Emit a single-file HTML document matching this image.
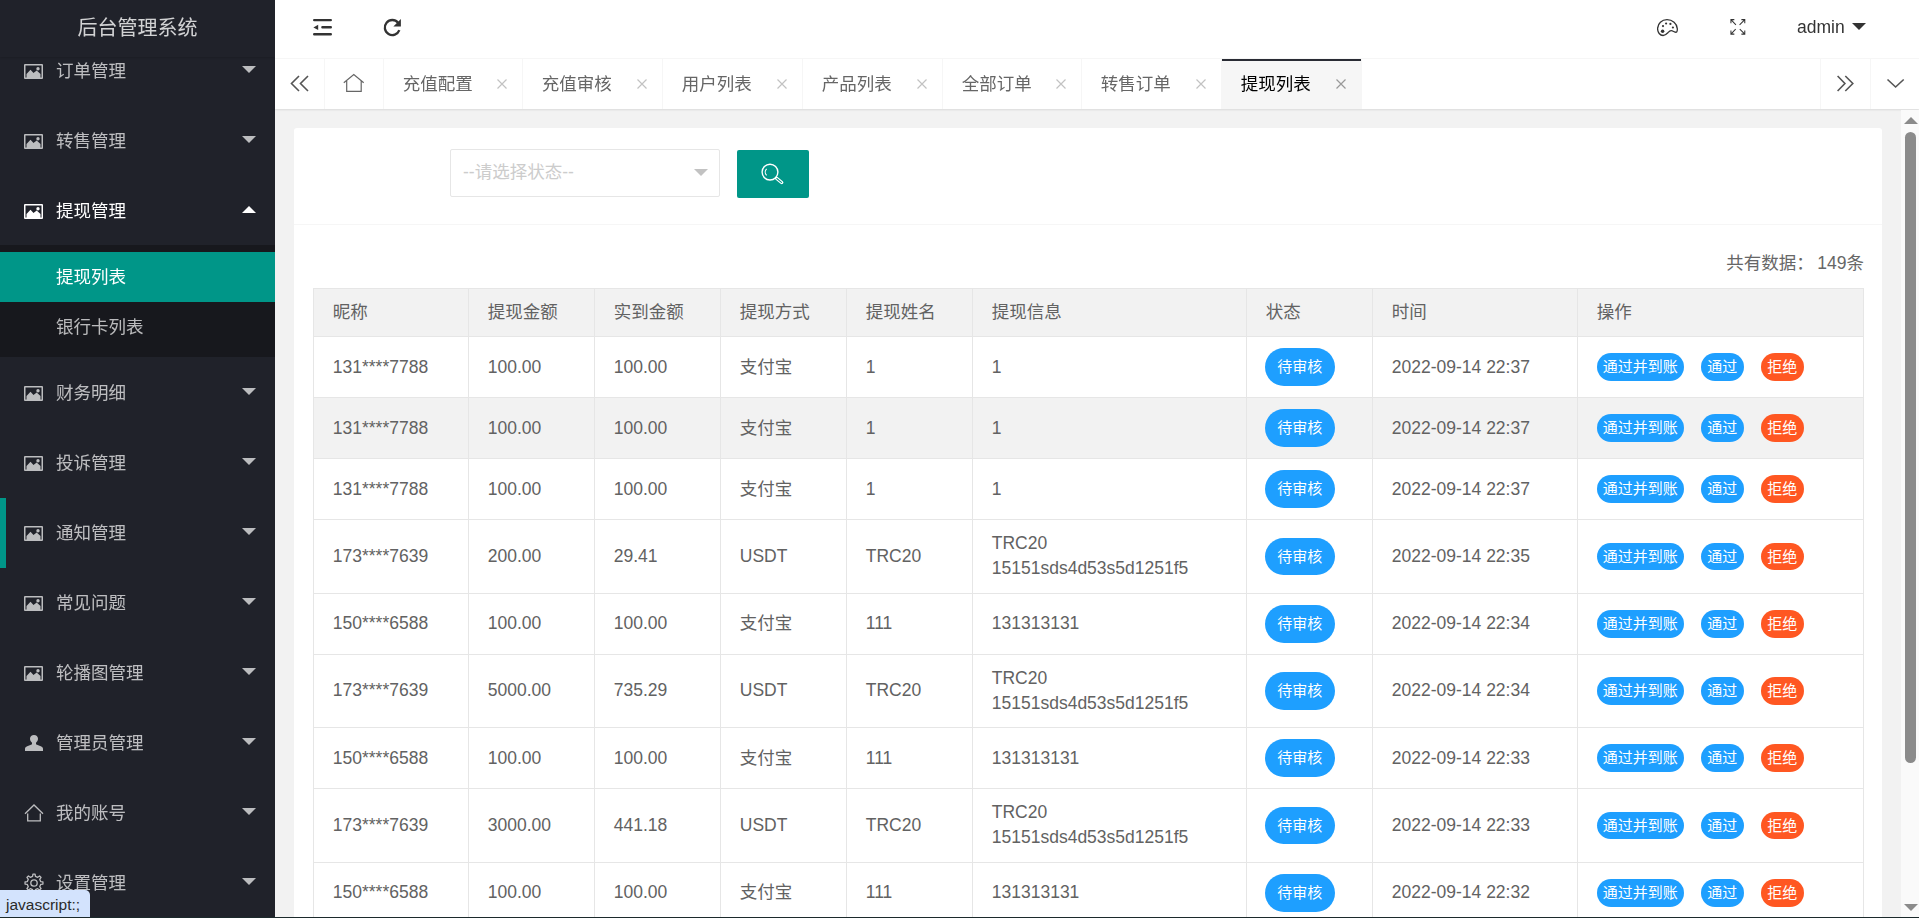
<!DOCTYPE html><html lang="zh-CN"><head><meta charset="utf-8"><title>后台管理系统</title><style>
*{margin:0;padding:0;box-sizing:border-box}
html,body{width:1919px;height:918px;overflow:hidden;background:#f2f2f2}
body{font-family:"Liberation Sans","Noto Sans CJK SC",sans-serif;font-size:17.5px;color:#333;position:relative}
.abs{position:absolute}
#side{position:absolute;left:0;top:0;width:275px;height:918px;background:#20222a;overflow:hidden}
#logo{position:absolute;left:0;top:0;width:275px;height:57px;background:#20222a;color:rgba(255,255,255,.8);font-size:20px;line-height:56px;text-align:center;z-index:5;box-shadow:0 1px 2px 0 rgba(0,0,0,.15)}
.mi{position:absolute;left:0;width:275px;height:70px;color:rgba(255,255,255,.7);line-height:70px}
.mi .ic{position:absolute;left:24px;top:27px;width:20px;height:16px}
.mi .tx{position:absolute;left:56px;top:1px;font-size:17.5px;white-space:nowrap}
.mi .ar{position:absolute;left:242px;top:31px;width:0;height:0;border:7px solid transparent;border-top:7px solid rgba(255,255,255,.7);border-bottom-width:0}
.mi.open{color:#fff}
.mi.open .ar{border:7px solid transparent;border-bottom:7px solid #fff;border-top-width:0;top:31px}
#sub{position:absolute;left:0;top:245px;width:275px;height:112px;background:#17181d}
#sub .s{position:absolute;left:0;width:275px;height:50px;line-height:50px;padding-left:56px;color:rgba(255,255,255,.7);font-size:17.5px}
#sub .s.on{background:#009688;color:#fff}
#side .tx,.g{filter:grayscale(1)}
.g{display:inline-block}
#bar{position:absolute;left:0;top:498px;width:6px;height:70px;background:#009688}
#hdr{position:absolute;left:275px;top:0;width:1644px;height:59px;background:#fff;border-bottom:1px solid #f7f7f7}
#tabs{position:absolute;left:275px;top:59px;width:1644px;height:50px;background:#fff;box-shadow:0 1px 2px 0 rgba(0,0,0,.1)}
.tb{position:absolute;top:0;height:50px;border-right:1px solid #f6f6f6;color:#666;font-size:17.5px;line-height:50px;white-space:nowrap}
.tb .x{position:absolute;right:14.500px;top:19px;width:12px;height:12px}
.tb.on{background:#f6f6f6;color:#000}
.tb.on:before{content:"";position:absolute;left:0;top:0;width:100%;height:2px;background:#292b34}
#card{position:absolute;left:294px;top:128px;width:1588px;height:800px;background:#fff;border-radius:3px}
#sel{position:absolute;left:450px;top:149px;width:270px;height:48px;border:1px solid #e6e6e6;border-radius:2px;background:#fff;color:#ccc;font-size:17.5px;line-height:44px;padding-left:12px}
#sel:after{content:"";position:absolute;left:243px;top:19px;border:7px solid transparent;border-top:7px solid #c2c2c2;border-bottom-width:0}
#btn{position:absolute;left:737px;top:150px;width:72px;height:48px;background:#009688;border-radius:2px}
#sep{position:absolute;left:294px;top:224px;width:1588px;height:1px;background:#f6f6f6}
#cnt{position:absolute;right:55px;top:250px;font-size:17.5px;color:#666;line-height:26px;white-space:pre}
table{position:absolute;left:313px;top:288px;width:1550px;border-collapse:collapse;table-layout:fixed;color:#626262;font-size:17.5px}
th,td{border:1px solid #e6e6e6;padding:0 0 0 18.750px;text-align:left;font-weight:400;line-height:25px;white-space:nowrap}
th{height:48px;background:#f2f2f2}
td.u{padding-bottom:2px}

tr.hv td{background:#f2f2f2}
.bd{display:inline-block;height:37.500px;line-height:37.500px;padding:0 12.500px;border-radius:19px;background:#1e9fff;color:#fff;font-size:15px;vertical-align:middle}
.b{display:inline-block;height:27.500px;line-height:27.500px;padding:0 6.250px;border-radius:14px;background:#1e9fff;color:#fff;font-size:15px;vertical-align:middle;margin-right:17.500px}
.b.r{background:#ff5722;margin-right:0}
#sb{position:absolute;left:1901px;top:110px;width:18px;height:808px;background:#fafafa}
#sb .th{position:absolute;left:4px;top:22px;width:11px;height:631px;border-radius:6px;background:#8b8b8b}
#sb .up{position:absolute;left:3px;top:7px;border:7px solid transparent;border-bottom:7px solid #8b8b8b;border-top-width:0}
#sb .dn{position:absolute;left:3px;top:794px;border:7px solid transparent;border-top:7px solid #8b8b8b;border-bottom-width:0}
#st{position:absolute;left:0;top:890px;width:90px;height:28px;background:#d3e3fd;border-top-right-radius:5px;color:#2a2a2a;font-size:15.500px;line-height:29px;padding-left:6px;z-index:9}
#bl{position:absolute;left:0;top:917px;width:1919px;height:1px;background:#1c2a2c;z-index:10}
</style></head><body>
<div id="side">
<div class="mi" style="top:35px"><svg class="ic" style="width:19px;height:15px;top:29px" viewBox="0 0 19 15"><path fill="currentColor" fill-rule="evenodd" d="M1 0h17a1 1 0 0 1 1 1v13a1 1 0 0 1-1 1H1a1 1 0 0 1-1-1V1a1 1 0 0 1 1-1zM1.500 1.500v12h16v-12zM2.500 13.500V10l4-4.300 3 3.200L12.700 6.500 16.500 10v3.500zM14 3a1.700 1.700 0 1 1 0 3.400A1.700 1.700 0 0 1 14 3z"/></svg><span class="tx">订单管理</span><i class="ar"></i></div>
<div class="mi" style="top:105px"><svg class="ic" style="width:19px;height:15px;top:29px" viewBox="0 0 19 15"><path fill="currentColor" fill-rule="evenodd" d="M1 0h17a1 1 0 0 1 1 1v13a1 1 0 0 1-1 1H1a1 1 0 0 1-1-1V1a1 1 0 0 1 1-1zM1.500 1.500v12h16v-12zM2.500 13.500V10l4-4.300 3 3.200L12.700 6.500 16.500 10v3.500zM14 3a1.700 1.700 0 1 1 0 3.400A1.700 1.700 0 0 1 14 3z"/></svg><span class="tx">转售管理</span><i class="ar"></i></div>
<div class="mi open" style="top:175px"><svg class="ic" style="width:19px;height:15px;top:29px" viewBox="0 0 19 15"><path fill="currentColor" fill-rule="evenodd" d="M1 0h17a1 1 0 0 1 1 1v13a1 1 0 0 1-1 1H1a1 1 0 0 1-1-1V1a1 1 0 0 1 1-1zM1.500 1.500v12h16v-12zM2.500 13.500V10l4-4.300 3 3.200L12.700 6.500 16.500 10v3.500zM14 3a1.700 1.700 0 1 1 0 3.400A1.700 1.700 0 0 1 14 3z"/></svg><span class="tx">提现管理</span><i class="ar"></i></div>
<div class="mi" style="top:357px"><svg class="ic" style="width:19px;height:15px;top:29px" viewBox="0 0 19 15"><path fill="currentColor" fill-rule="evenodd" d="M1 0h17a1 1 0 0 1 1 1v13a1 1 0 0 1-1 1H1a1 1 0 0 1-1-1V1a1 1 0 0 1 1-1zM1.500 1.500v12h16v-12zM2.500 13.500V10l4-4.300 3 3.200L12.700 6.500 16.500 10v3.500zM14 3a1.700 1.700 0 1 1 0 3.400A1.700 1.700 0 0 1 14 3z"/></svg><span class="tx">财务明细</span><i class="ar"></i></div>
<div class="mi" style="top:427px"><svg class="ic" style="width:19px;height:15px;top:29px" viewBox="0 0 19 15"><path fill="currentColor" fill-rule="evenodd" d="M1 0h17a1 1 0 0 1 1 1v13a1 1 0 0 1-1 1H1a1 1 0 0 1-1-1V1a1 1 0 0 1 1-1zM1.500 1.500v12h16v-12zM2.500 13.500V10l4-4.300 3 3.200L12.700 6.500 16.500 10v3.500zM14 3a1.700 1.700 0 1 1 0 3.400A1.700 1.700 0 0 1 14 3z"/></svg><span class="tx">投诉管理</span><i class="ar"></i></div>
<div class="mi" style="top:497px"><svg class="ic" style="width:19px;height:15px;top:29px" viewBox="0 0 19 15"><path fill="currentColor" fill-rule="evenodd" d="M1 0h17a1 1 0 0 1 1 1v13a1 1 0 0 1-1 1H1a1 1 0 0 1-1-1V1a1 1 0 0 1 1-1zM1.500 1.500v12h16v-12zM2.500 13.500V10l4-4.300 3 3.200L12.700 6.500 16.500 10v3.500zM14 3a1.700 1.700 0 1 1 0 3.400A1.700 1.700 0 0 1 14 3z"/></svg><span class="tx">通知管理</span><i class="ar"></i></div>
<div class="mi" style="top:567px"><svg class="ic" style="width:19px;height:15px;top:29px" viewBox="0 0 19 15"><path fill="currentColor" fill-rule="evenodd" d="M1 0h17a1 1 0 0 1 1 1v13a1 1 0 0 1-1 1H1a1 1 0 0 1-1-1V1a1 1 0 0 1 1-1zM1.500 1.500v12h16v-12zM2.500 13.500V10l4-4.300 3 3.200L12.700 6.500 16.500 10v3.500zM14 3a1.700 1.700 0 1 1 0 3.400A1.700 1.700 0 0 1 14 3z"/></svg><span class="tx">常见问题</span><i class="ar"></i></div>
<div class="mi" style="top:637px"><svg class="ic" style="width:19px;height:15px;top:29px" viewBox="0 0 19 15"><path fill="currentColor" fill-rule="evenodd" d="M1 0h17a1 1 0 0 1 1 1v13a1 1 0 0 1-1 1H1a1 1 0 0 1-1-1V1a1 1 0 0 1 1-1zM1.500 1.500v12h16v-12zM2.500 13.500V10l4-4.300 3 3.200L12.700 6.500 16.500 10v3.500zM14 3a1.700 1.700 0 1 1 0 3.400A1.700 1.700 0 0 1 14 3z"/></svg><span class="tx">轮播图管理</span><i class="ar"></i></div>
<div class="mi" style="top:707px"><svg class="ic" style="left:25px;top:28px;width:18px;height:16px" viewBox="1 0 18 18" preserveAspectRatio="none"><path fill="currentColor" d="M10 0c2.300 0 4 1.900 4 4.300 0 1.700-.8 3.400-2 4.300v1.300c0 .6.400 1 1 1.200l3.800 1.500c1.300.5 2.200 1.600 2.200 3V18H1v-2.400c0-1.400.9-2.500 2.200-3L7 11.100c.6-.2 1-.6 1-1.200V8.600C6.800 7.700 6 6 6 4.300 6 1.900 7.700 0 10 0z"/></svg><span class="tx">管理员管理</span><i class="ar"></i></div>
<div class="mi" style="top:777px"><svg class="ic" style="left:24px;top:27px;width:20px;height:18px" viewBox="0 0 20 18"><path fill="none" stroke="currentColor" stroke-width="1.300" stroke-linejoin="miter" d="M1 9.700L10 1l9 8.700M3.700 9.500v7.300h12.600V9.500"/></svg><span class="tx">我的账号</span><i class="ar"></i></div>
<div class="mi" style="top:847px"><svg class="ic" style="left:24px;top:26px;width:20px;height:20px" viewBox="0 0 20 20"><g fill="none" stroke="currentColor" stroke-width="1.300" stroke-linejoin="round"><circle cx="10" cy="10" r="3.200"/><path d="M8.57 3.35 L8.94 1.06 L11.06 1.06 L11.43 3.35 L13.69 4.29 L15.57 2.93 L17.07 4.43 L15.71 6.31 L16.65 8.57 L18.94 8.94 L18.94 11.06 L16.65 11.43 L15.71 13.69 L17.07 15.57 L15.57 17.07 L13.69 15.71 L11.43 16.65 L11.06 18.94 L8.94 18.94 L8.57 16.65 L6.31 15.71 L4.43 17.07 L2.93 15.57 L4.29 13.69 L3.35 11.43 L1.06 11.06 L1.06 8.94 L3.35 8.57 L4.29 6.31 L2.93 4.43 L4.43 2.93 L6.31 4.29Z"/></g></svg><span class="tx">设置管理</span><i class="ar"></i></div>
<div id="sub"><div class="s on" style="top:7px"><span class="g">提现列表</span></div><div class="s" style="top:57px"><span class="g">银行卡列表</span></div></div>
<div id="bar"></div>
<div id="logo"><span class="g">后台管理系统</span></div>
</div>
<div id="hdr">
<svg class="abs" style="left:38px;top:18px;width:20px;height:19px" viewBox="0 0 20 19"><g stroke="#333" stroke-width="2.400" stroke-linecap="round"><path d="M1.200 2.100h16.600M9.400 9.300h8.400M1.200 16.300h16.600"/></g><path fill="#333" d="M0.400 9.400l4.800-2.600v5.200z"/></svg>
<svg class="abs" style="left:108px;top:18px;width:20px;height:20px" viewBox="0 0 20 20"><path fill="none" stroke="#333" stroke-width="2.300" d="M16.350 12.070A7.500 7.500 0 1 1 15.050 4.680"/><path fill="#333" d="M17.900 0.900v7.500h-7.500z"/></svg>
<svg class="abs" style="left:1382px;top:19px;width:21px;height:18px" viewBox="0 0 21 18"><path fill="none" stroke="#333" stroke-width="1.300" d="M0.600 9.600C0.700 4.500 4.800 0.700 10 0.700c5.400 0 10 4 10.300 8.900 0.100 1.500-0.100 2.600-0.500 3.200-0.500 0.600-1.400 0.500-2.300 0.100-1.300-0.600-2.300-1.300-3.400-1.200-1.200 0.100-2 0.800-2.900 1.700-1.400 1.400-2.900 3.100-5.100 3.100C3 16.500 0.500 13.400 0.600 9.600z"/><circle cx="6" cy="7.100" r="1.100" fill="#333"/><circle cx="9.100" cy="4.500" r="1.100" fill="#333"/><circle cx="13.400" cy="4.900" r="1.100" fill="#333"/><circle cx="15.900" cy="8.500" r="1.100" fill="#333"/><circle cx="5.600" cy="12.300" r="1.750" fill="#333"/></svg>
<svg class="abs" style="left:1454.500px;top:19px;width:16px;height:16px" viewBox="0 0 17 16" preserveAspectRatio="none"><g fill="none" stroke="#333" stroke-width="1.100"><path d="M1 4.200V0.600h3.600M1 0.600l5.300 5.200M12.100 0.600h3.600v3.600M15.700 0.600l-5.500 5.200M1 11.500v3.600h3.600M1 15.100l5-4.900M15.700 11.500v3.600h-3.600M15.700 15.100l-5.300-4.900"/></g></svg>
<span class="abs" style="left:1522px;top:14px;font-size:17.5px;line-height:26px;color:#333;filter:grayscale(1)">admin</span>
<i class="abs" style="left:1577px;top:23px;border:7px solid transparent;border-top:7px solid #333;border-bottom-width:0"></i>
</div>
<div id="tabs">
<div class="tb" style="left:0;width:50px"></div>
<div class="tb" style="left:50px;width:59px"></div>
<div class="tb" style="left:109px;width:139px;padding-left:18.750px"><span class="g">充值配置</span><svg class="x" viewBox="0 0 12 12"><path stroke="#c2c2c2" stroke-width="1.200" d="M1.500 1.500l9 9M10.500 1.500l-9 9"/></svg></div>
<div class="tb" style="left:248px;width:140px;padding-left:18.750px"><span class="g">充值审核</span><svg class="x" viewBox="0 0 12 12"><path stroke="#c2c2c2" stroke-width="1.200" d="M1.500 1.500l9 9M10.500 1.500l-9 9"/></svg></div>
<div class="tb" style="left:388px;width:140px;padding-left:18.750px"><span class="g">用户列表</span><svg class="x" viewBox="0 0 12 12"><path stroke="#c2c2c2" stroke-width="1.200" d="M1.500 1.500l9 9M10.500 1.500l-9 9"/></svg></div>
<div class="tb" style="left:528px;width:140px;padding-left:18.750px"><span class="g">产品列表</span><svg class="x" viewBox="0 0 12 12"><path stroke="#c2c2c2" stroke-width="1.200" d="M1.500 1.500l9 9M10.500 1.500l-9 9"/></svg></div>
<div class="tb" style="left:668px;width:139px;padding-left:18.750px"><span class="g">全部订单</span><svg class="x" viewBox="0 0 12 12"><path stroke="#c2c2c2" stroke-width="1.200" d="M1.500 1.500l9 9M10.500 1.500l-9 9"/></svg></div>
<div class="tb" style="left:807px;width:140px;padding-left:18.750px"><span class="g">转售订单</span><svg class="x" viewBox="0 0 12 12"><path stroke="#c2c2c2" stroke-width="1.200" d="M1.500 1.500l9 9M10.500 1.500l-9 9"/></svg></div>
<div class="tb on" style="left:947px;width:140px;padding-left:18.750px"><span class="g">提现列表</span><svg class="x" viewBox="0 0 12 12"><path stroke="#999" stroke-width="1.200" d="M1.500 1.500l9 9M10.500 1.500l-9 9"/></svg></div>
<div class="tb" style="left:1545px;width:51px;border-left:1px solid #f6f6f6"></div>
<svg class="abs" style="left:0;top:0;width:1644px;height:50px" viewBox="0 0 1644 50"><g fill="none" stroke="#555" stroke-width="1.600"><path d="M24 17L16.500 24.500 24 32M33 17l-7.500 7.500L33 32"/><path d="M1562.600 17l7.300 7.500-7.300 7.500M1570.300 17l7.500 7.500-7.500 7.500"/><path d="M1612.500 20.500l8.100 7.500 8.100-7.500"/><path stroke="#666" stroke-width="1.200" d="M68.800 23.800L78.800 15.500l9.900 8.300M71.700 22v10.300h14.500V22"/></g></svg>
</div>
<div id="card"></div><div id="sep"></div>
<div id="sel">--请选择状态--</div>
<div id="btn"><svg class="abs" style="left:22px;top:12px;width:26px;height:24px" viewBox="0 0 26 24"><g fill="none" stroke="#fff"><circle cx="11" cy="10.100" r="7.900" stroke-width="1.400"/><path stroke-width="3.400" stroke-linecap="round" d="M17.500 16.200l5.200 4.300"/><path stroke="#009688" stroke-width="1.100" stroke-linecap="round" d="M17.800 16.500l4.700 3.900"/><path stroke-width="1.200" d="M7.600 13.400a4.700 4.700 0 0 1 0-6.600"/></g></svg></div>
<div id="cnt">共有数据：<span style="margin-left:3.500px">149条</span></div>
<table><colgroup><col style="width:155px"><col style="width:126px"><col style="width:126px"><col style="width:126px"><col style="width:126px"><col style="width:274px"><col style="width:126px"><col style="width:205px"><col style="width:286px"></colgroup>
<tr><th>昵称</th><th>提现金额</th><th>实到金额</th><th>提现方式</th><th>提现姓名</th><th>提现信息</th><th>状态</th><th>时间</th><th>操作</th></tr>
<tr class="" style="height:61px"><td>131****7788</td><td>100.00</td><td>100.00</td><td>支付宝</td><td>1</td><td>1</td><td><span class="bd" style="margin-left:-1px">待审核</span></td><td>2022-09-14 22:37</td><td><span class="b" style="padding:0 5.900px">通过并到账</span><span class="b">通过</span><span class="b r">拒绝</span></td></tr>
<tr class="hv" style="height:61px"><td>131****7788</td><td>100.00</td><td>100.00</td><td>支付宝</td><td>1</td><td>1</td><td><span class="bd" style="margin-left:-1px">待审核</span></td><td>2022-09-14 22:37</td><td><span class="b" style="padding:0 5.900px">通过并到账</span><span class="b">通过</span><span class="b r">拒绝</span></td></tr>
<tr class="" style="height:61px"><td>131****7788</td><td>100.00</td><td>100.00</td><td>支付宝</td><td>1</td><td>1</td><td><span class="bd" style="margin-left:-1px">待审核</span></td><td>2022-09-14 22:37</td><td><span class="b" style="padding:0 5.900px">通过并到账</span><span class="b">通过</span><span class="b r">拒绝</span></td></tr>
<tr class="d" style="height:74px"><td>173****7639</td><td>200.00</td><td>29.41</td><td>USDT</td><td>TRC20</td><td class="u">TRC20<br>15151sds4d53s5d1251f5</td><td><span class="bd" style="margin-left:-1px">待审核</span></td><td>2022-09-14 22:35</td><td><span class="b" style="padding:0 5.900px">通过并到账</span><span class="b">通过</span><span class="b r">拒绝</span></td></tr>
<tr class="" style="height:61px"><td class="u">150****6588</td><td class="u">100.00</td><td class="u">100.00</td><td class="u">支付宝</td><td class="u">111</td><td class="u">131313131</td><td><span class="bd" style="margin-left:-1px">待审核</span></td><td class="u">2022-09-14 22:34</td><td><span class="b" style="padding:0 5.900px">通过并到账</span><span class="b">通过</span><span class="b r">拒绝</span></td></tr>
<tr class="d" style="height:73px"><td class="u">173****7639</td><td class="u">5000.00</td><td class="u">735.29</td><td class="u">USDT</td><td class="u">TRC20</td><td>TRC20<br>15151sds4d53s5d1251f5</td><td><span class="bd" style="margin-left:-1px">待审核</span></td><td class="u">2022-09-14 22:34</td><td><span class="b" style="padding:0 5.900px">通过并到账</span><span class="b">通过</span><span class="b r">拒绝</span></td></tr>
<tr class="" style="height:61px"><td>150****6588</td><td>100.00</td><td>100.00</td><td>支付宝</td><td>111</td><td>131313131</td><td><span class="bd" style="margin-left:-1px">待审核</span></td><td>2022-09-14 22:33</td><td><span class="b" style="padding:0 5.900px">通过并到账</span><span class="b">通过</span><span class="b r">拒绝</span></td></tr>
<tr class="d" style="height:74px"><td>173****7639</td><td>3000.00</td><td>441.18</td><td>USDT</td><td>TRC20</td><td class="u">TRC20<br>15151sds4d53s5d1251f5</td><td><span class="bd" style="margin-left:-1px">待审核</span></td><td>2022-09-14 22:33</td><td><span class="b" style="padding:0 5.900px">通过并到账</span><span class="b">通过</span><span class="b r">拒绝</span></td></tr>
<tr class="" style="height:61px"><td class="u">150****6588</td><td class="u">100.00</td><td class="u">100.00</td><td class="u">支付宝</td><td class="u">111</td><td class="u">131313131</td><td><span class="bd" style="margin-left:-1px">待审核</span></td><td class="u">2022-09-14 22:32</td><td><span class="b" style="padding:0 5.900px">通过并到账</span><span class="b">通过</span><span class="b r">拒绝</span></td></tr>
</table>
<div id="sb"><i class="up"></i><div class="th"></div><i class="dn"></i></div>
<div id="st">javascript:;</div><div id="bl"></div>
</body></html>
